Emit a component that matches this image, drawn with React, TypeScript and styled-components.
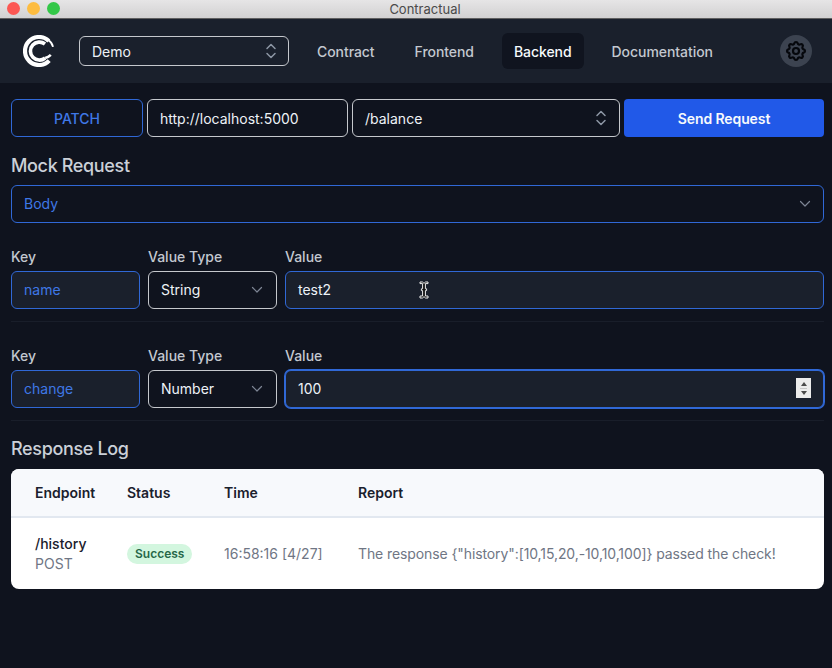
import { FC, ReactNode } from "react";
import styled, { createGlobalStyle } from "styled-components";
import { HiOutlineCog } from "react-icons/hi";

const GlobalStyle = createGlobalStyle`
  html, body {
    margin: 0;
    padding: 0;
    background: #0f131e;
  }
  body {
    font-family: Inter, "Noto Sans", sans-serif;
  }
`;

const UpDown: FC = () => (
  <UpDownIcon viewBox="0 0 12 18" fill="none" stroke="currentColor" strokeWidth="1.5" strokeLinecap="round" strokeLinejoin="round">
    <path d="M2 6.5 L6 2.5 L10 6.5" />
    <path d="M2 11.5 L6 15.5 L10 11.5" />
  </UpDownIcon>
);

const ChevronDown: FC = () => (
  <DownIcon viewBox="0 0 12 8" fill="none" stroke="currentColor" strokeWidth="1.2" strokeLinecap="round" strokeLinejoin="round">
    <path d="M1.5 1.5 L6 6 L10.5 1.5" />
  </DownIcon>
);

const Logo: FC = () => (
  <LogoIcon viewBox="0 0 32 32" fill="none" stroke="#fff">
    <path d="M25.8 6 A14 14 0 1 0 26.2 25.6" strokeWidth="4.2" />
    <path d="M22 9 A9 9 0 1 0 22.2 23" strokeWidth="3.6" />
    <path d="M25.4 5.2 Q29.2 7.4 30 11.8" strokeWidth="1.8" />
    <path d="M22.2 23 Q25.4 22.2 27.8 19.8" strokeWidth="2.6" />
  </LogoIcon>
);

const Field: FC<{ label: string; children: ReactNode; grow?: boolean; width?: number }> = ({
  label,
  children,
  grow,
  width,
}) => (
  <FieldBox $grow={grow} $width={width}>
    <FieldLabel>{label}</FieldLabel>
    {children}
  </FieldBox>
);

const App: FC = () => {
  const tabs = ["Contract", "Frontend", "Backend", "Documentation"];
  return (
    <Window>
      <GlobalStyle />
      <TitleBar>
        <Lights>
          <Light $color="#fc5753" />
          <Light $color="#fdbc40" />
          <Light $color="#33c748" />
        </Lights>
        <Title>Contractual</Title>
      </TitleBar>

      <Nav>
        <Logo />
        <ProjectSelect>
          Demo
          <UpDown />
        </ProjectSelect>
        <Tabs>
          {tabs.map((tab) => (
            <Tab key={tab} $active={tab === "Backend"}>
              {tab}
            </Tab>
          ))}
        </Tabs>
        <SettingsButton>
          <HiOutlineCog size={24} />
        </SettingsButton>
      </Nav>

      <Main>
        <RequestRow>
          <MethodBox>PATCH</MethodBox>
          <Box $width={201}>http://localhost:5000</Box>
          <Box $grow>
            /balance
            <UpDown />
          </Box>
          <SendButton>Send Request</SendButton>
        </RequestRow>

        <Heading>Mock Request</Heading>
        <Box $blue $spread>
          Body
          <ChevronDown />
        </Box>

        <ParamRow>
          <Field label="Key" width={129}>
            <InputBox $blue>name</InputBox>
          </Field>
          <Field label="Value Type" width={129}>
            <TypeSelect $spread>
              String
              <ChevronDown />
            </TypeSelect>
          </Field>
          <Field label="Value" grow>
            <InputBox>
              test2
              <TextCursor viewBox="0 0 10 18" fill="#111" stroke="#eee" strokeWidth="1">
                <path d="M1 1 H3.5 L5 2.4 L6.5 1 H9 V2.6 H6.4 V7.8 H7.6 V9.6 H6.4 V15 H9 V17 H6.5 L5 15.6 L3.5 17 H1 V15 H3.6 V9.6 H2.4 V7.8 H3.6 V2.6 H1 Z" />
              </TextCursor>
            </InputBox>
          </Field>
        </ParamRow>
        <Divider />

        <ParamRow>
          <Field label="Key" width={129}>
            <InputBox $blue>change</InputBox>
          </Field>
          <Field label="Value Type" width={129}>
            <TypeSelect $spread>
              Number
              <ChevronDown />
            </TypeSelect>
          </Field>
          <Field label="Value" grow>
            <InputBox $focused>
              100
              <Spinner>
                <SpinUp />
                <SpinLine />
                <SpinDown />
              </Spinner>
            </InputBox>
          </Field>
        </ParamRow>
        <Divider />

        <LogHeading>Response Log</LogHeading>
        <LogCard>
          <LogHead>
            <EndpointCol>Endpoint</EndpointCol>
            <StatusCol>Status</StatusCol>
            <TimeCol>Time</TimeCol>
            <div>Report</div>
          </LogHead>
          <LogRow>
            <EndpointCol>
              <EndpointPath>/history</EndpointPath>
              <EndpointMethod>POST</EndpointMethod>
            </EndpointCol>
            <StatusCol>
              <Badge>Success</Badge>
            </StatusCol>
            <TimeCol>16:58:16 [4/27]</TimeCol>
            <ReportText>The response {'{"history":[10,15,20,-10,10,100]}'} passed the check!</ReportText>
          </LogRow>
        </LogCard>
      </Main>
    </Window>
  );
};

export default App;

const Window = styled.div`
  width: 832px;
  height: 668px;
  overflow: hidden;
  background: #0f131e;
`;

const TitleBar = styled.div`
  position: relative;
  height: 18px;
  display: flex;
  align-items: center;
  justify-content: center;
  padding-left: 18px;
  background: linear-gradient(#e6e5e6, #d2d1d2);
  border-bottom: 1px solid #5f5f60;
`;

const Lights = styled.div`
  position: absolute;
  left: 7px;
  top: 2px;
  display: flex;
  gap: 7px;
`;

const Light = styled.div<{ $color: string }>`
  width: 13px;
  height: 13px;
  border-radius: 50%;
  background: ${({ $color }) => $color};
`;

const Title = styled.div`
  font-size: 13px;
  color: #4a4a4a;
`;

const Nav = styled.div`
  height: 64px;
  display: flex;
  align-items: center;
  padding: 0 20px 0 23px;
  background: #1a202c;
`;

const LogoIcon = styled.svg`
  width: 32px;
  height: 32px;
  flex: none;
`;

const ProjectSelect = styled.div`
  box-sizing: border-box;
  width: 210px;
  height: 30px;
  margin-left: 24px;
  padding: 0 11px 0 12px;
  display: flex;
  align-items: center;
  justify-content: space-between;
  border: 1px solid #c5c8cd;
  border-radius: 6px;
  color: #edf2f7;
  font-size: 14px;
`;

const UpDownIcon = styled.svg`
  width: 12px;
  height: 18px;
  flex: none;
  color: #8e97a6;
  margin-left: auto;
`;

const DownIcon = styled.svg`
  width: 12px;
  height: 8px;
  flex: none;
  margin-top: 2px;
  color: #7d8594;
`;

const Tabs = styled.div`
  display: flex;
  gap: 16px;
  margin-left: 16px;
`;

const Tab = styled.div<{ $active?: boolean }>`
  height: 36px;
  padding: 0 12px;
  display: flex;
  align-items: center;
  border-radius: 6px;
  font-size: 14px;
  font-weight: 500;
  letter-spacing: -0.06px;
  color: ${({ $active }) => ($active ? "#f7fafc" : "#c3c8d0")};
  background: ${({ $active }) => ($active ? "#10141f" : "transparent")};
`;

const SettingsButton = styled.div`
  margin-left: auto;
  width: 32px;
  height: 32px;
  display: flex;
  align-items: center;
  justify-content: center;
  border-radius: 50%;
  background: #3c4350;
  color: #05070c;

  path {
    stroke-width: 2.2;
  }
`;

const Main = styled.div`
  padding: 16px 8px 0 11px;
`;

const RequestRow = styled.div`
  display: flex;
  gap: 4px;
`;

const Box = styled.div<{ $width?: number; $grow?: boolean; $blue?: boolean; $spread?: boolean }>`
  box-sizing: border-box;
  height: 38px;
  padding: 0 12px ${({ $spread }) => ($spread ? "2px" : "0")};
  display: flex;
  align-items: center;
  justify-content: ${({ $spread }) => ($spread ? "space-between" : "flex-start")};
  border-radius: 6px;
  border: 1px solid ${({ $blue }) => ($blue ? "#3068d6" : "#c5c8cd")};
  color: ${({ $blue }) => ($blue ? "#3f78e6" : "#edf2f7")};
  font-size: 14px;
  ${({ $width }) => ($width ? `width: ${$width}px; flex: none;` : "")}
  ${({ $grow }) => ($grow ? "flex: 1;" : "")}
`;

const TypeSelect = styled(Box)`
  padding-right: 13px;
`;

const MethodBox = styled.div`
  box-sizing: border-box;
  width: 132px;
  height: 38px;
  display: flex;
  align-items: center;
  justify-content: center;
  border: 1px solid #3068d6;
  border-radius: 6px;
  color: #3f78e6;
  font-size: 14px;
  font-weight: 500;
`;

const SendButton = styled.div`
  width: 200px;
  height: 38px;
  display: flex;
  align-items: center;
  justify-content: center;
  flex: none;
  border-radius: 4px;
  background: #2159e8;
  color: #f7fafc;
  font-size: 14px;
  font-weight: 600;
  letter-spacing: -0.1px;
`;

const Heading = styled.div`
  margin: 18px 0 8px;
  height: 22px;
  line-height: 22px;
  font-size: 18px;
  font-weight: 500;
  letter-spacing: -0.35px;
  color: #cbd0d8;
`;

const ParamRow = styled.div`
  display: flex;
  gap: 8px;
  margin-top: 25px;
`;

const FieldBox = styled.div<{ $grow?: boolean; $width?: number }>`
  display: flex;
  flex-direction: column;
  ${({ $grow }) => ($grow ? "flex: 1;" : "")}
  ${({ $width }) => ($width ? `width: ${$width}px; flex: none;` : "")}
`;

const FieldLabel = styled.div`
  height: 18px;
  line-height: 18px;
  margin-bottom: 5px;
  font-size: 14px;
  font-weight: 500;
  color: #c3c8d0;
`;

const InputBox = styled.div<{ $blue?: boolean; $focused?: boolean }>`
  position: relative;
  box-sizing: border-box;
  height: 38px;
  padding: 0 12px 2px;
  display: flex;
  align-items: center;
  border-radius: 6px;
  border: 1px solid #3068d6;
  background: #1a202c;
  color: ${({ $blue }) => ($blue ? "#3f78e6" : "#edf2f7")};
  font-size: 14px;
  ${({ $focused }) => ($focused ? "box-shadow: 0 0 0 1px #3068d6;" : "")}
`;

const TextCursor = styled.svg`
  position: absolute;
  left: 133px;
  top: 9px;
  width: 10px;
  height: 18px;
`;

const Spinner = styled.div`
  position: absolute;
  right: 12px;
  top: 7px;
  width: 15px;
  height: 20px;
  display: flex;
  flex-direction: column;
  align-items: center;
  justify-content: center;
  gap: 2px;
  background: #ececec;
`;

const SpinUp = styled.div`
  width: 0;
  height: 0;
  border-left: 3.5px solid transparent;
  border-right: 3.5px solid transparent;
  border-bottom: 4px solid #4a4a4a;
`;

const SpinDown = styled.div`
  width: 0;
  height: 0;
  border-left: 3.5px solid transparent;
  border-right: 3.5px solid transparent;
  border-top: 4px solid #4a4a4a;
`;

const SpinLine = styled.div`
  width: 7px;
  height: 1px;
  background: #c8c8c8;
`;

const Divider = styled.div`
  height: 1px;
  margin-top: 12px;
  background: #191e2a;
`;

const LogHeading = styled(Heading)`
  margin: 17px 0 9px;
`;

const LogCard = styled.div`
  height: 120px;
  border-radius: 8px;
  overflow: hidden;
  background: #fff;
`;

const LogHead = styled.div`
  box-sizing: border-box;
  height: 49px;
  padding: 0 24px;
  display: flex;
  align-items: center;
  background: #f7f9fc;
  border-bottom: 2px solid #e2e8f0;
  font-size: 14px;
  font-weight: 600;
  color: #1a202c;
`;

const LogRow = styled.div`
  height: 71px;
  padding: 0 24px;
  display: flex;
  align-items: center;
  font-size: 14px;
  color: #6f7684;
`;

const EndpointCol = styled.div`
  width: 92px;
  flex: none;
`;

const StatusCol = styled.div`
  width: 97px;
  flex: none;
`;

const TimeCol = styled.div`
  width: 134px;
  flex: none;
`;

const ReportText = styled.div`
  letter-spacing: -0.1px;
`;

const EndpointPath = styled.div`
  line-height: 20px;
  font-weight: 500;
  color: #1a202c;
`;

const EndpointMethod = styled.div`
  line-height: 20px;
`;

const Badge = styled.span`
  display: inline-block;
  padding: 0 8px;
  line-height: 20px;
  border-radius: 10px;
  background: #d3f6df;
  color: #276749;
  font-size: 12px;
  font-weight: 600;
`;
